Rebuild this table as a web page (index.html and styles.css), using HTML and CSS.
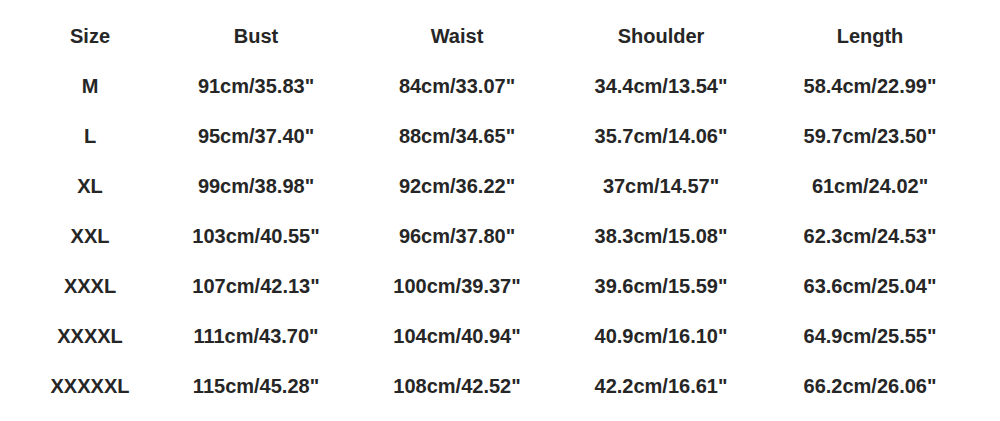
FILE: index.html
```html
<!DOCTYPE html>
<html>
<head>
<meta charset="utf-8">
<link rel="stylesheet" href="styles.css">
</head>
<body>
<div class="chart">
  <div class="row head"><span>Size</span><span>Bust</span><span>Waist</span><span>Shoulder</span><span>Length</span></div>
  <div class="row"><span>M</span><span>91cm/35.83"</span><span>84cm/33.07"</span><span>34.4cm/13.54"</span><span>58.4cm/22.99"</span></div>
  <div class="row"><span>L</span><span>95cm/37.40"</span><span>88cm/34.65"</span><span>35.7cm/14.06"</span><span>59.7cm/23.50"</span></div>
  <div class="row"><span>XL</span><span>99cm/38.98"</span><span>92cm/36.22"</span><span>37cm/14.57"</span><span>61cm/24.02"</span></div>
  <div class="row"><span>XXL</span><span>103cm/40.55"</span><span>96cm/37.80"</span><span>38.3cm/15.08"</span><span>62.3cm/24.53"</span></div>
  <div class="row"><span>XXXL</span><span>107cm/42.13"</span><span>100cm/39.37"</span><span>39.6cm/15.59"</span><span>63.6cm/25.04"</span></div>
  <div class="row"><span>XXXXL</span><span>111cm/43.70"</span><span>104cm/40.94"</span><span>40.9cm/16.10"</span><span>64.9cm/25.55"</span></div>
  <div class="row"><span>XXXXXL</span><span>115cm/45.28"</span><span>108cm/42.52"</span><span>42.2cm/16.61"</span><span>66.2cm/26.06"</span></div>
</div>
</body>
</html>
```

FILE: styles.css
```css
html, body {
  margin: 0;
  background: #fff;
}
.chart {
  width: 1000px;
  height: 421px;
  padding-top: 11px;
  box-sizing: border-box;
  font-family: "Liberation Sans", Arial, sans-serif;
  font-weight: bold;
  font-size: 20px;
  color: #262626;
}
.row {
  display: grid;
  grid-template-columns: 180px 152px 250px 158px 260px;
  height: 50px;
  align-items: center;
}
.row span {
  text-align: center;
  white-space: nowrap;
}
```
